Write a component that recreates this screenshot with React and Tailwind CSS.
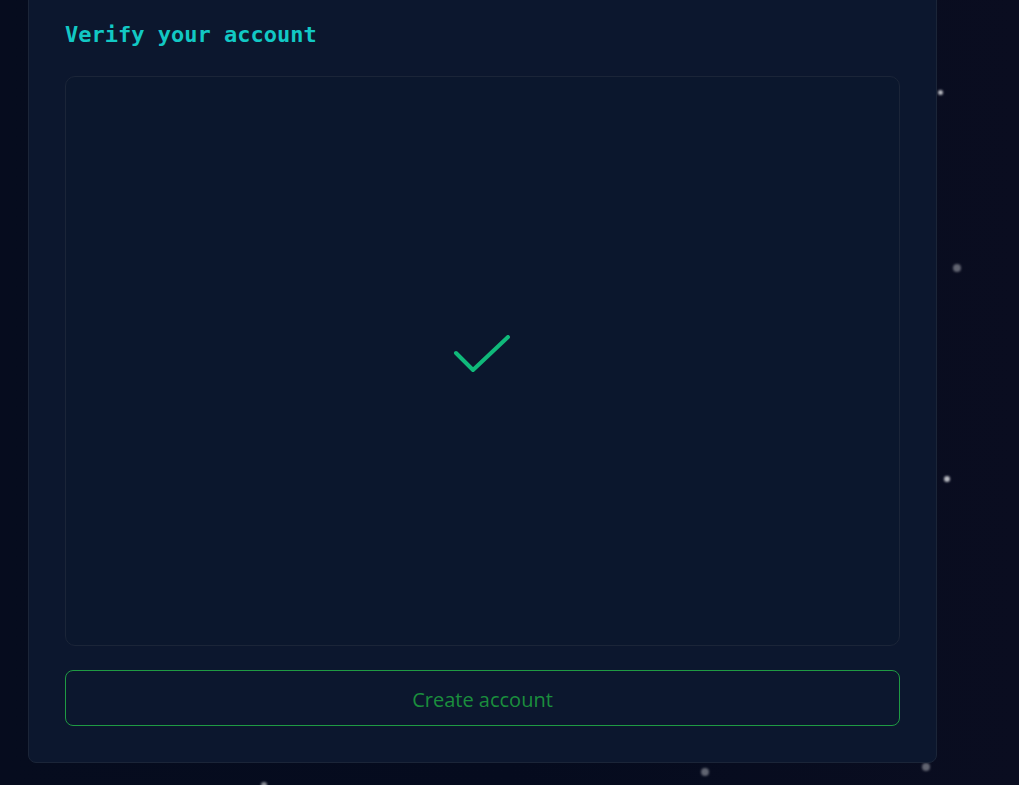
import React from 'react';

const stars = [
  { x: 940, y: 92, s: 5, o: 'opacity-80' },
  { x: 957, y: 268, s: 8, o: 'opacity-40' },
  { x: 947, y: 479, s: 6, o: 'opacity-80' },
  { x: 705, y: 772, s: 8, o: 'opacity-40' },
  { x: 926, y: 767, s: 8, o: 'opacity-40' },
  { x: 264, y: 785, s: 6, o: 'opacity-60' },
];

export default function App() {
  return (
    <div className="relative h-[785px] w-[1019px] overflow-hidden bg-gradient-to-r from-[#060c1e] via-[#050b1e] to-[#0a0d20]">
      {/* stars */}
      {stars.map((st, i) => (
        <span
          key={i}
          className={`absolute rounded-full bg-gray-200 blur-[1px] ${st.o}`}
          style={{ left: st.x - st.s / 2, top: st.y - st.s / 2, width: st.s, height: st.s }}
        />
      ))}

      <div className="relative ml-[28px] mt-[-14px] w-[909px] rounded-lg border border-[#1b2538] bg-[#0c172e] px-9 pb-9 pt-9">
        <h2 className="font-['DejaVu_Sans_Mono',monospace] text-[22px] font-bold leading-6 text-[#12c8c4]">
          Verify your account
        </h2>

        <div className="mt-[29px] flex h-[570px] items-center justify-center rounded-[10px] border border-[#1b2538] bg-[#0b172d]">
          <svg width="60" height="44" viewBox="0 0 60 44" fill="none" className="mt-[-8px]">
            <polyline
              points="3,18 20,35 55,2"
              stroke="#10b97a"
              strokeWidth="4"
              strokeLinecap="round"
              strokeLinejoin="round"
            />
          </svg>
        </div>

        <button className="mt-[24px] flex h-[56px] w-full items-center justify-center rounded-lg border border-[#1f9a43] bg-[#0c172e] pt-[4px] font-['Open_Sans',sans-serif] text-[20px] font-normal text-[#1b8e3d]">
          Create account
        </button>
      </div>
    </div>
  );
}
